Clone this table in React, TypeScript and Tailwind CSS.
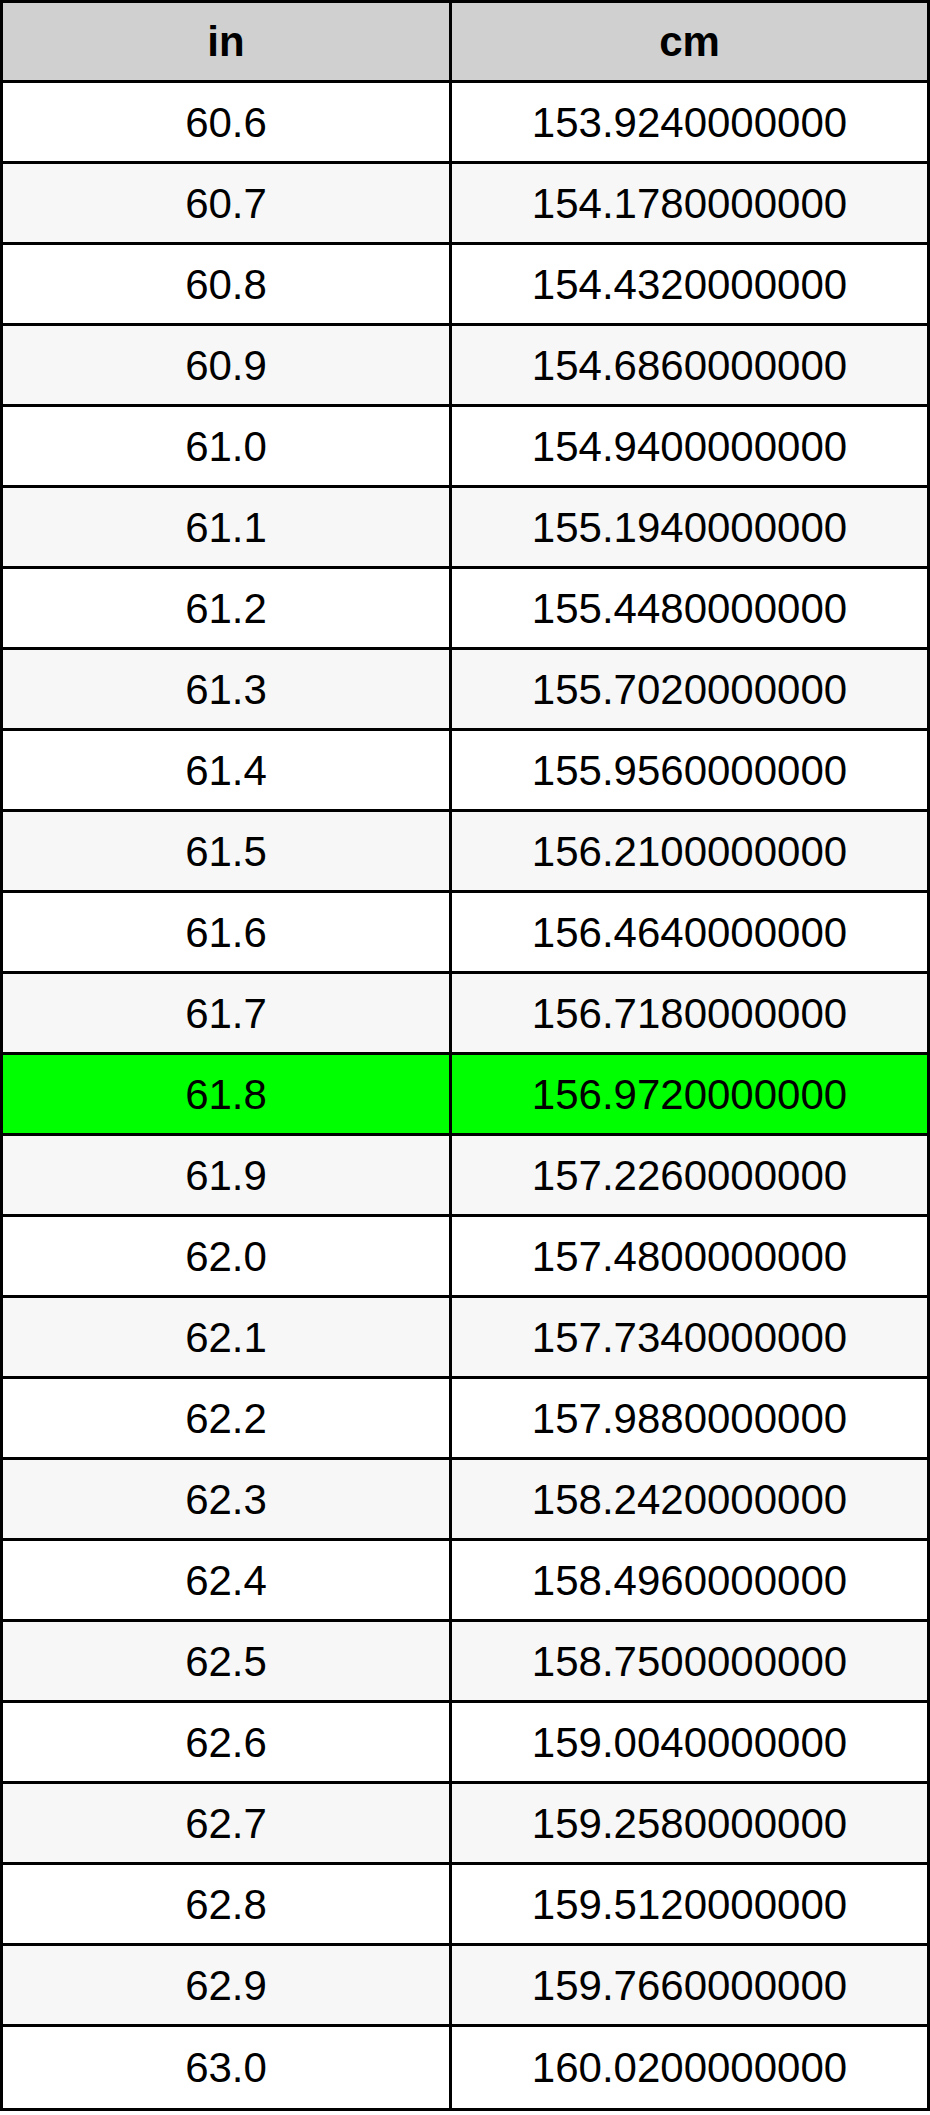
import React from "react";

const rows: [string, string][] = [
  ["60.6", "153.9240000000"],
  ["60.7", "154.1780000000"],
  ["60.8", "154.4320000000"],
  ["60.9", "154.6860000000"],
  ["61.0", "154.9400000000"],
  ["61.1", "155.1940000000"],
  ["61.2", "155.4480000000"],
  ["61.3", "155.7020000000"],
  ["61.4", "155.9560000000"],
  ["61.5", "156.2100000000"],
  ["61.6", "156.4640000000"],
  ["61.7", "156.7180000000"],
  ["61.8", "156.9720000000"],
  ["61.9", "157.2260000000"],
  ["62.0", "157.4800000000"],
  ["62.1", "157.7340000000"],
  ["62.2", "157.9880000000"],
  ["62.3", "158.2420000000"],
  ["62.4", "158.4960000000"],
  ["62.5", "158.7500000000"],
  ["62.6", "159.0040000000"],
  ["62.7", "159.2580000000"],
  ["62.8", "159.5120000000"],
  ["62.9", "159.7660000000"],
  ["63.0", "160.0200000000"],
];

export default function App() {
  return (
    <div
      className="w-[930px] bg-white pb-[7px] text-black"
      style={{ fontFamily: '"Liberation Sans", Arial, sans-serif' }}
    >
      <div className="border-[3px] border-black">
        <div className="flex h-[80px] border-b-[3px] border-black bg-[#d0d0d0] text-[42px] font-bold">
          <div className="flex w-[449px] items-center justify-center border-r-[3px] border-black">
            in
          </div>
          <div className="flex flex-1 items-center justify-center">cm</div>
        </div>
        {rows.map(([a, b], i) => {
          const bg =
            i === 12 ? "bg-[#00ff00]" : i % 2 === 1 ? "bg-[#f7f7f7]" : "bg-white";
          const last = i === rows.length - 1;
          return (
            <div
              key={a}
              className={`flex h-[81px] text-[42px] ${bg} ${
                last ? "h-[78px]" : "border-b-[3px] border-black"
              }`}
            >
              <div className="flex w-[449px] items-center justify-center border-r-[3px] border-black">
                {a}
              </div>
              <div className="flex flex-1 items-center justify-center">{b}</div>
            </div>
          );
        })}
      </div>
    </div>
  );
}
